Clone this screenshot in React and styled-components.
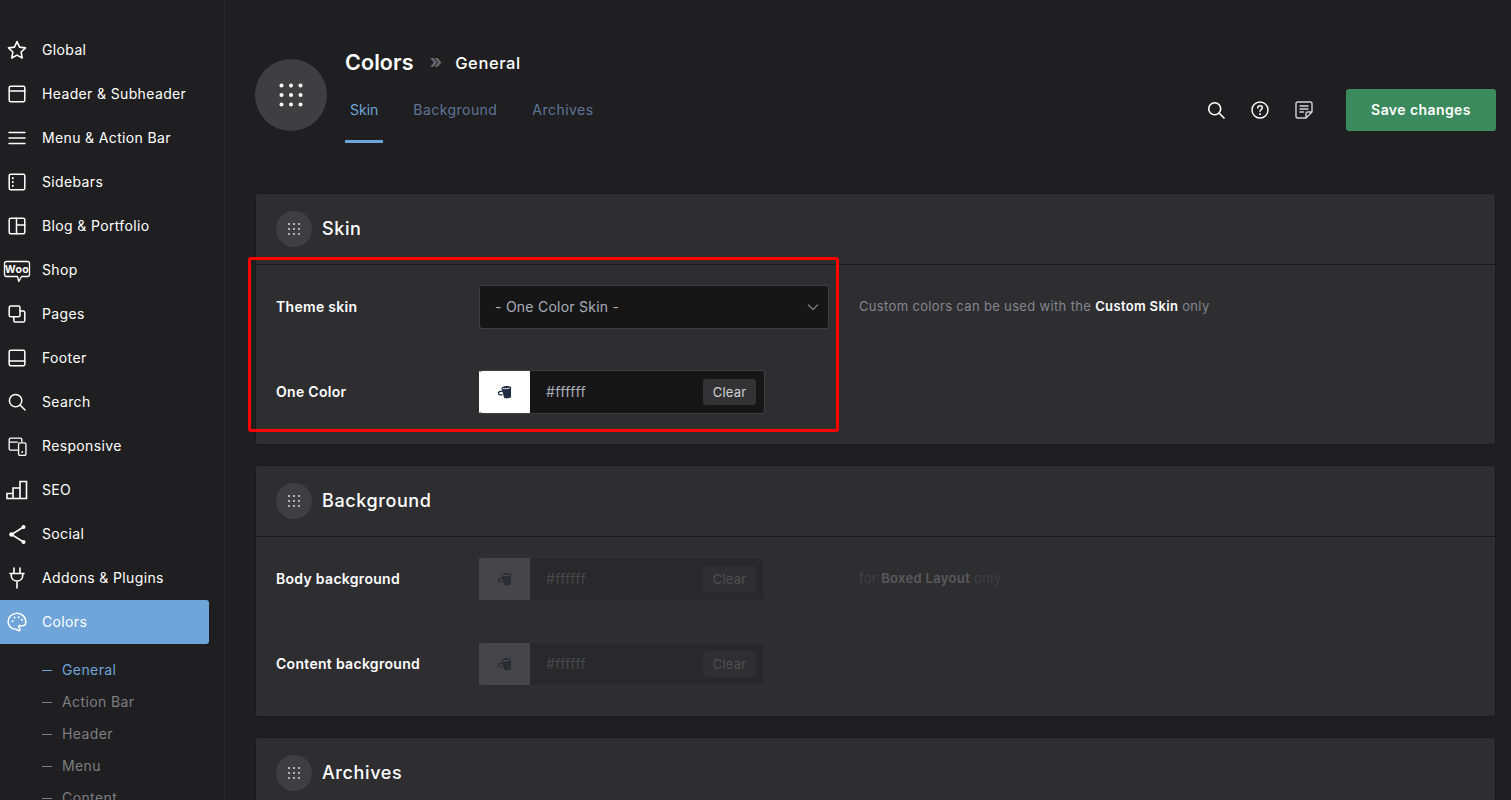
import React from "react";
import styled, { createGlobalStyle } from "styled-components";

const font = `"Inter", "Noto Sans", "Liberation Sans", sans-serif`;

const Global = createGlobalStyle`
  html, body { margin: 0; padding: 0; background: #1f1f21; }
  body { font-family: ${font}; overflow: hidden; }
  * { box-sizing: border-box; }
`;

const Page = styled.div`
  position: relative;
  display: flex;
  width: 1511px;
  height: 800px;
  overflow: hidden;
  background: #1f1f21;
`;
const Side = styled.nav`
  flex: 0 0 225px;
  height: 800px;
  padding: 28px 15px 0 0;
  border-right: 1px solid #2b2b2e;
`;
const NavRow = styled.div`
  display: flex;
  align-items: center;
  height: 44px;
  padding-left: 8px;
  gap: 16px;
  color: #fff;
  font-size: 14px;
  letter-spacing: 0.36px;
  background: ${(p) => (p.$active ? "#6fa5d9" : "transparent")};
  border-radius: 0 3px 3px 0;
`;
const NavText = styled.span`
  padding-bottom: 2px;
`;
const IconBox = styled.span`
  flex: 0 0 18px;
  width: 18px;
  height: 18px;
  display: flex;
  align-items: center;
  justify-content: center;
  color: #fff;
  svg { flex: none; }
`;
const WooMark = styled.svg`
  margin-top: 3px;
`;
const SubList = styled.div`
  padding-top: 10px;
`;
const SubRow = styled.div`
  display: flex;
  align-items: center;
  height: 32px;
  padding-left: 42px;
  gap: 10px;
  font-size: 14px;
  letter-spacing: 0.4px;
  color: ${(p) => (p.$active ? "#6fa5d9" : "#7d7d82")};
  &::before {
    content: "";
    width: 10px;
    height: 1px;
    background: currentColor;
  }
`;
const SubText = styled.span`
  padding-bottom: 2px;
`;
const Main = styled.main`
  flex: 1;
  padding: 48px 15px 0 30px;
  min-width: 0;
`;
const Head = styled.header`
  display: flex;
  align-items: flex-start;
  height: 145px;
`;
const BigBadge = styled.div`
  width: 72px;
  height: 72px;
  margin-top: 11px;
  border-radius: 50%;
  background: #3f3f42;
  display: flex;
  align-items: center;
  justify-content: center;
  color: #fff;
`;
const TitleBlock = styled.div`
  margin-left: 18px;
  flex: 1;
`;
const Crumbs = styled.div`
  display: flex;
  align-items: center;
  height: 28px;
  color: #fff;
`;
const Title = styled.h1`
  margin: 0;
  font-size: 21.5px;
  line-height: 28px;
  font-weight: 600;
  letter-spacing: 0.1px;
`;
const Sep = styled.span`
  margin: 0 13px 2px 16px;
  font-size: 19px;
  font-weight: 700;
  color: #68686d;
`;
const Sub = styled.span`
  margin-top: 2px;
  font-size: 16.5px;
  font-weight: 500;
  letter-spacing: 0.6px;
`;
const Tabs = styled.div`
  display: flex;
  gap: 25px;
`;
const Tab = styled.div`
  padding: 24px 5px 20px;
  font-size: 14px;
  line-height: 20px;
  letter-spacing: ${(p) => (p.$active ? "0" : "0.45px")};
  color: ${(p) => (p.$active ? "#6fa5d9" : "#5f7499")};
  border-bottom: 3px solid ${(p) => (p.$active ? "#6fa5d9" : "transparent")};
`;
const Actions = styled.div`
  display: flex;
  align-items: center;
  margin-top: 41px;
  height: 42px;
`;
const IconBtn = styled.button`
  width: 44px;
  height: 44px;
  padding: 0;
  border: 0;
  background: none;
  color: #fff;
  display: flex;
  align-items: center;
  justify-content: center;
`;
const Save = styled.button`
  width: 150px;
  height: 42px;
  margin-left: 20px;
  padding: 0 0 2px;
  border: 0;
  border-radius: 3px;
  background: #3b8a5d;
  color: #fff;
  font-family: ${font};
  font-size: 14px;
  font-weight: 600;
  letter-spacing: 0.42px;
`;
const Panel = styled.section`
  background: #2e2e31;
  border: 1px solid #1a1a1c;
  border-radius: 3px;
  margin-bottom: 20px;
  height: ${(p) => p.$h}px;
`;
const PanelHead = styled.div`
  display: flex;
  align-items: center;
  height: 71px;
  padding: 0 20px;
  gap: 10px;
  border-bottom: 1px solid #1a1a1c;
`;
const SmallBadge = styled.div`
  width: 36px;
  height: 36px;
  border-radius: 50%;
  background: #3f3f42;
  color: #d8d8d8;
  display: flex;
  align-items: center;
  justify-content: center;
`;
const PanelTitle = styled.h2`
  margin: 0 0 2px;
  color: #fff;
  font-size: 18px;
  font-weight: 500;
  letter-spacing: 0.6px;
`;
const PanelBody = styled.div`
  display: flex;
  flex-direction: column;
  gap: 41px;
  padding: 20px 20px 0;
`;
const FormRow = styled.div`
  display: flex;
  align-items: center;
  height: 44px;
`;
const Label = styled.label`
  flex: 0 0 203px;
  padding-bottom: 2px;
  color: #fff;
  font-size: 14px;
  font-weight: 600;
  letter-spacing: 0.3px;
`;
const Control = styled.div`
  flex: 0 0 350px;
  opacity: ${(p) => (p.$off ? 0.2 : 1)};
`;
const Select = styled.div`
  height: 44px;
  display: flex;
  align-items: center;
  justify-content: space-between;
  padding: 0 8px 2px 15px;
  background: #161617;
  border: 1px solid #3f3f42;
  border-radius: 3px;
  color: #a9aeb8;
  font-size: 14px;
  letter-spacing: 0.25px;
`;
const Chevron = styled.svg`
  margin-top: 2px;
`;
const Field = styled.div`
  width: 286px;
  height: 44px;
  display: flex;
  align-items: center;
  background: #161617;
  border: 1px solid #3f3f42;
  border-left-color: ${(p) => (p.$off ? "#a8a8a8" : "#fff")};
  border-radius: 3px;
  overflow: hidden;
`;
const Swatch = styled.div`
  flex: 0 0 50px;
  height: 100%;
  background: ${(p) => (p.$off ? "#a8a8a8" : "#fff")};
  display: flex;
  align-items: center;
  justify-content: center;
`;
const Hex = styled.span`
  flex: 1;
  padding: 0 0 2px 16px;
  color: #a9aeb8;
  font-size: 14px;
  letter-spacing: 0.4px;
`;
const Clear = styled.span`
  width: 53px;
  height: 26px;
  margin-right: 8px;
  border-radius: 3px;
  background: #333336;
  color: #cfcfd2;
  font-size: 13px;
  letter-spacing: 0.2px;
  display: flex;
  align-items: center;
  justify-content: center;
`;
const Note = styled.p`
  margin: 0 0 2px 30px;
  color: #83868f;
  font-size: 13px;
  letter-spacing: 0.34px;
  opacity: ${(p) => (p.$off ? 0.2 : 1)};
  b {
    color: #fff;
    font-weight: 600;
  }
`;
const Marker = styled.div`
  position: absolute;
  left: 248px;
  top: 257px;
  width: 591px;
  height: 175px;
  border: 3px solid #ff0000;
  border-radius: 3px;
  pointer-events: none;
`;

const S = ({ children, size = 18, vb = 18, sw = 1.5 }) => (
  <svg width={size} height={size} viewBox={`0 0 ${vb} ${vb}`} fill="none" stroke="currentColor" strokeWidth={sw} strokeLinecap="round" strokeLinejoin="round">
    {children}
  </svg>
);

const icons = {
  star: <S size={20} sw={1.4}><path d="M9 1.400l2.300 5 5.400.7-4 3.700 1 5.400L9 13.600l-4.700 2.600 1-5.400-4-3.700 5.400-.7z" /></S>,
  header: <S><rect x="1.200" y="1.300" width="15.600" height="15.400" rx="1.500" /><path d="M1.200 6h15.600" /></S>,
  menu: <S><path d="M1 3.500h16M1 9h16M1 14.500h16" /></S>,
  sidebar: <S><rect x="1.200" y="1.300" width="15.600" height="15.400" rx="1.500" /><path d="M4.800 5v.4M4.800 8.800v.4M4.800 12.600v.4" strokeWidth="1.800" /></S>,
  blog: <S><rect x="1.200" y="1.300" width="15.600" height="15.400" rx="1.500" /><path d="M8.500 1.300v15.400M8.500 8h8.300" /></S>,
  pages: <S><rect x="1.200" y="1" width="10.800" height="10.800" rx="1.500" /><path d="M12 6h3.200c.9 0 1.600.7 1.600 1.600v7.800c0 .9-.7 1.600-1.600 1.600H7.400c-.9 0-1.600-.7-1.600-1.600V12" /></S>,
  footer: <S><rect x="1.200" y="1.300" width="15.600" height="15.400" rx="1.500" /><path d="M1.200 12h15.600" /></S>,
  search: <S><circle cx="7.600" cy="7.600" r="6.200" /><path d="M12 12l5 5" /></S>,
  responsive: <S size={19} sw={1.250}><path d="M9 12.500H2.500c-.8 0-1.400-.6-1.400-1.300V2.300c0-.7.600-1.300 1.400-1.300h9.300c.7 0 1.300.6 1.300 1.300v2M1.100 4.800H9" /><rect x="10" y="5.500" width="7" height="12" rx="1.400" /><path d="M13.500 14v.300" strokeWidth="1.600" /></S>,
  seo: <svg width="22" height="20" viewBox="0 0 22 20" fill="none" stroke="currentColor" strokeWidth="1.600"><path d="M1 18.500V13.500h6v5zM7 18.500V8h7v10.500zM14 18.500V1.500h6.500v17z" /></svg>,
  social: <svg width="19" height="21" viewBox="0 0 19 21" fill="none" stroke="currentColor" strokeWidth="1.500"><path d="M15.500 3L3.500 10.500l12 7.500" /><circle cx="15.500" cy="3" r="2" fill="currentColor" stroke="none" /><circle cx="3.500" cy="10.500" r="2.300" fill="currentColor" stroke="none" /><circle cx="15.500" cy="18" r="2" fill="currentColor" stroke="none" /></svg>,
  plug: <svg width="18" height="22" viewBox="0 0 18 22" fill="none" stroke="currentColor" strokeWidth="1.600" strokeLinecap="round"><path d="M6 1v5M12 1v5M2 6.500h14M3.300 6.500v2.300c0 3 2.500 5.200 5.700 5.200s5.700-2.200 5.700-5.200V6.500M9 14v7" /></svg>,
  palette: <S size={20} sw={1.400}><path d="M9 1.200C4.600 1.200 1 4.500 1 8.700c0 3.900 3.100 6.800 6.700 6.800 1 0 2.500 1.300 3.300 1.300 1 0 .8-2-.3-3.100-.6-.7.300-1.600 1.200-1.400 1.900.3 5.100.4 5.100-3.300 0-4.300-3.500-7.800-8-7.800z" /><path d="M5 8.200v.1M6.800 5v.1M10.600 4.600v.1M13.400 7v.1" strokeWidth="1.700" /></S>,
};

const Woo = () => (
  <WooMark width="28" height="23" viewBox="0 0 28 23" fill="none">
    <path d="M3.500 1.500h21c1.200 0 2 .8 2 2v11c0 1.200-.8 2-2 2h-6l-2.700 5-1.300-5h-11c-1.200 0-2-.8-2-2v-11c0-1.200.8-2 2-2z" stroke="currentColor" strokeWidth="1.300" strokeLinejoin="round" />
    <text x="14" y="13" textAnchor="middle" fill="currentColor" fontSize="10.500" fontWeight="700" fontFamily={font}>Woo</text>
  </WooMark>
);

const Dots = ({ size, step, r }) => {
  const c = size / 2;
  const pts = [-step, 0, step];
  return (
    <svg width={size} height={size} viewBox={`0 0 ${size} ${size}`} fill="currentColor">
      {pts.flatMap((y) => pts.map((x) => <circle key={`${x}${y}`} cx={c + x} cy={c + y} r={r} />))}
    </svg>
  );
};

const Bucket = ({ color }) => (
  <svg width="16" height="15" viewBox="0 0 16 15" fill="none">
    <g transform="rotate(-6 8 7)">
      <path d="M5 3c0-1 2.400-1.800 4.700-1.800S14.500 2 14.500 3L13.500 12.500c-.3 1.200-6 1.400-7 0z" fill={color} />
      <path d="M6 6H3.200C1.600 6 1 7.300 1.600 8.500c.6 1.100 2.200 1.100 3.600.6" stroke={color} strokeWidth="1.300" />
      <path d="M6.200 3.300c1.700.7 5.500.7 7 0" stroke="#ffffff" strokeWidth=".9" />
    </g>
  </svg>
);

const nav = [
  ["Global", "star"], ["Header & Subheader", "header"], ["Menu & Action Bar", "menu"], ["Sidebars", "sidebar"],
  ["Blog & Portfolio", "blog"], ["Shop", "woo"], ["Pages", "pages"], ["Footer", "footer"], ["Search", "search"],
  ["Responsive", "responsive"], ["SEO", "seo"], ["Social", "social"], ["Addons & Plugins", "plug"], ["Colors", "palette"],
];
const subs = ["General", "Action Bar", "Header", "Menu", "Content"];

const ColorField = ({ off }) => (
  <Control $off={off}>
    <Field $off={off}>
      <Swatch $off={off}><Bucket color="#1f2c44" /></Swatch>
      <Hex>#ffffff</Hex>
      <Clear>Clear</Clear>
    </Field>
  </Control>
);

const PanelHeader = ({ title }) => (
  <PanelHead>
    <SmallBadge><Dots size={16} step={5} r={1} /></SmallBadge>
    <PanelTitle>{title}</PanelTitle>
  </PanelHead>
);

export default function App() {
  return (
    <Page>
      <Global />
      <Side>
        {nav.map(([label, icon]) => (
          <NavRow key={label} $active={label === "Colors"}>
            <IconBox>{icon === "woo" ? <Woo /> : icons[icon]}</IconBox>
            <NavText>{label}</NavText>
          </NavRow>
        ))}
        <SubList>
          {subs.map((s, i) => <SubRow key={s} $active={i === 0}><SubText>{s}</SubText></SubRow>)}
        </SubList>
      </Side>
      <Main>
        <Head>
          <BigBadge><Dots size={32} step={9.500} r={2} /></BigBadge>
          <TitleBlock>
            <Crumbs>
              <Title>Colors</Title>
              <Sep>»</Sep>
              <Sub>General</Sub>
            </Crumbs>
            <Tabs>
              <Tab $active>Skin</Tab>
              <Tab>Background</Tab>
              <Tab>Archives</Tab>
            </Tabs>
          </TitleBlock>
          <Actions>
            <IconBtn><svg width="18" height="18" viewBox="0 0 18 18" fill="none" stroke="currentColor" strokeWidth="1.600" strokeLinecap="round"><circle cx="7.700" cy="7.700" r="6" /><path d="M12.200 12.200L17 17" /></svg></IconBtn>
            <IconBtn><svg width="18" height="18" viewBox="0 0 18 18" fill="none" stroke="currentColor" strokeWidth="1.400" strokeLinecap="round"><circle cx="9" cy="9" r="8" /><path d="M6.800 7c0-1.300 1-2.200 2.300-2.200s2.200.9 2.200 2c0 1.800-2.300 1.700-2.300 3.500" strokeWidth="1.500" /><path d="M9 13v.2" strokeWidth="1.800" /></svg></IconBtn>
            <IconBtn><svg width="18" height="18" viewBox="0 0 18 18" fill="none" stroke="#d4d4d4" strokeWidth="1.400" strokeLinecap="round" strokeLinejoin="round"><path d="M11 17H2.500C1.600 17 1 16.400 1 15.500v-13C1 1.600 1.600 1 2.500 1h13c.9 0 1.500.6 1.500 1.500V11l-6 6zM11 17v-4.500c0-.9.6-1.500 1.500-1.500H17" /><path d="M5 5h8M5 8h8M5 11h3.500" /></svg></IconBtn>
            <Save>Save changes</Save>
          </Actions>
        </Head>
        <Panel $h={252}>
          <PanelHeader title="Skin" />
          <PanelBody>
            <FormRow>
              <Label>Theme skin</Label>
              <Control>
                <Select>
                  - One Color Skin -
                  <Chevron width="14" height="14" viewBox="0 0 14 14" fill="none" stroke="#7a7a80" strokeWidth="1.300"><path d="M2 4.500l5 5 5-5" /></Chevron>
                </Select>
              </Control>
              <Note>Custom colors can be used with the <b>Custom Skin</b> only</Note>
            </FormRow>
            <FormRow>
              <Label>One Color</Label>
              <ColorField />
            </FormRow>
          </PanelBody>
        </Panel>
        <Panel $h={252}>
          <PanelHeader title="Background" />
          <PanelBody>
            <FormRow>
              <Label>Body background</Label>
              <ColorField off />
              <Note $off>for <b>Boxed Layout</b> only</Note>
            </FormRow>
            <FormRow>
              <Label>Content background</Label>
              <ColorField off />
            </FormRow>
          </PanelBody>
        </Panel>
        <Panel $h={252}>
          <PanelHeader title="Archives" />
        </Panel>
      </Main>
      <Marker />
    </Page>
  );
}
